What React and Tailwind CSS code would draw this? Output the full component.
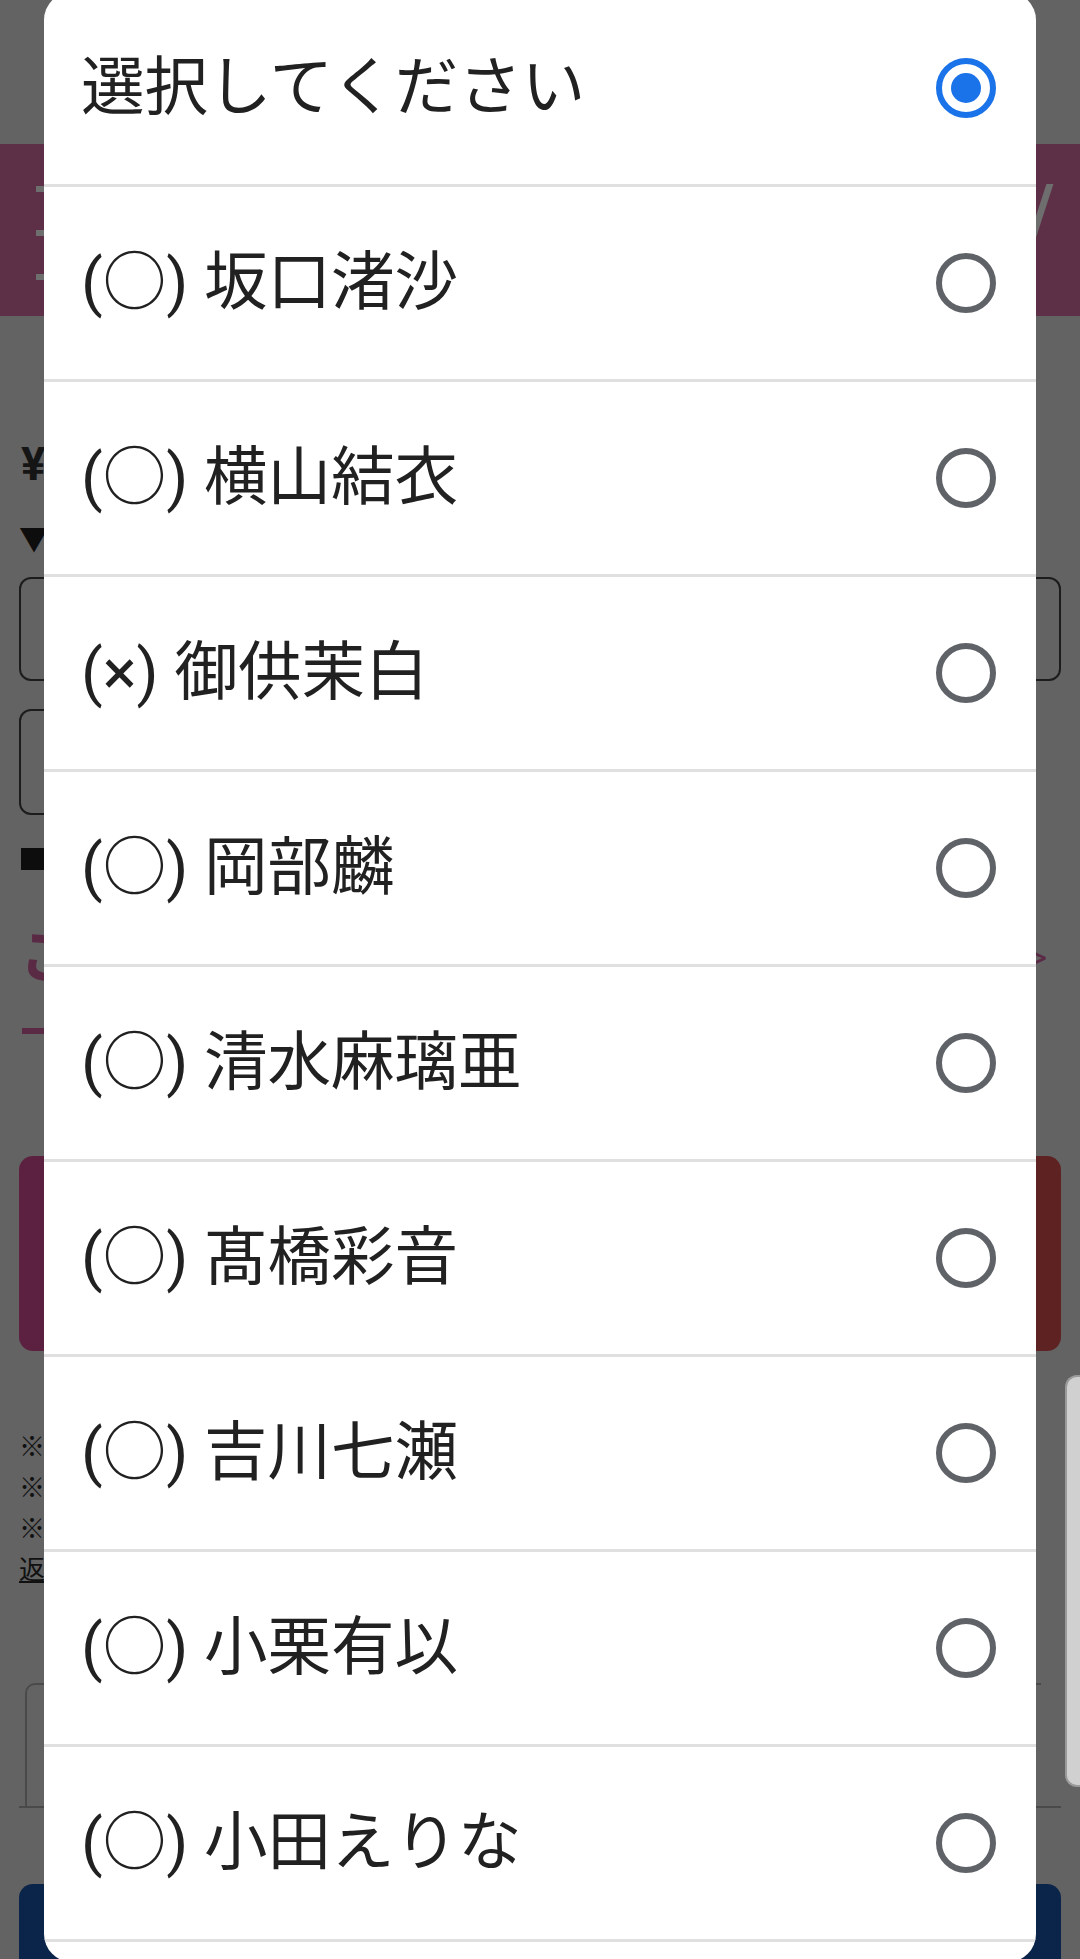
import React from "react";

const items = [
  { label: "選択してください", selected: true },
  { label: "(○) 坂口渚沙" },
  { label: "(○) 横山結衣" },
  { label: "(×) 御供茉白" },
  { label: "(○) 岡部麟" },
  { label: "(○) 清水麻璃亜" },
  { label: "(○) 髙橋彩音" },
  { label: "(○) 吉川七瀬" },
  { label: "(○) 小栗有以" },
  { label: "(○) 小田えりな" },
  { label: "" },
];

function Radio({ selected }) {
  if (selected) {
    return (
      <div className="w-[60px] h-[60px] rounded-full border-[6px] border-[#1a73e8] flex items-center justify-center shrink-0">
        <div className="w-[30px] h-[30px] rounded-full bg-[#1a73e8]" />
      </div>
    );
  }
  return <div className="w-[60px] h-[60px] rounded-full border-[6px] border-[#5f6368] shrink-0" />;
}

function Background() {
  return (
    <div className="flex flex-col font-['Roboto','Noto_Sans_CJK_JP',sans-serif]">
      <div className="h-[144px]" />
      <div className="h-[172px] bg-[#5e3048] flex items-start justify-between">
        <div className="flex flex-col gap-[38px] pt-[42px] pl-[36px]">
          <div className="w-[40px] h-[6px] bg-[#6e6e6e]" />
          <div className="w-[40px] h-[6px] bg-[#6e6e6e]" />
          <div className="w-[40px] h-[6px] bg-[#6e6e6e]" />
        </div>
        <div className="pt-[40px] pr-[36px]">
          <div className="w-[7px] h-[58px] bg-[#6e6e6e] skew-x-[-18deg]" />
        </div>
      </div>
      <div className="flex flex-col px-[19px]">
        <div className="h-[171px] flex items-end">
          <span className="text-[46px] leading-[46px] text-[#151515] font-bold pl-[2px]">¥</span>
        </div>
        <div className="h-[90px] flex items-end pb-[22px]">
          <span className="text-[30px] leading-none text-[#0d0d0d]">▼</span>
        </div>
        <div className="h-[104px] rounded-[12px] border-2 border-[#1c1c1c]" />
        <div className="h-[28px]" />
        <div className="h-[106px] w-[700px] rounded-[12px] border-2 border-[#1c1c1c]" />
        <div className="h-[33px]" />
        <div className="h-[22px] w-[24px] bg-[#0d0d0d] ml-[2px]" />
        <div className="h-[55px]" />
        <div className="flex justify-between items-center h-[65px] text-[#5a2a45]">
          <span className="text-[60px] leading-none font-bold">こ</span>
          <span className="text-[36px] leading-none pr-[14px]">&gt;</span>
        </div>
        <div className="h-[38px]" />
        <div className="h-[6px] w-[40px] bg-[#5a2a45] ml-[3px]" />
        <div className="h-[122px]" />
        <div className="h-[195px] rounded-[14px] bg-gradient-to-r from-[#5c2040] to-[#5e2222]" />
        <div className="h-[76px]" />
        <div className="flex flex-col text-[26px] leading-[41px] text-[#111]">
          <span>※あ</span>
          <span>※か</span>
          <span>※あ</span>
          <span className="underline">返品</span>
        </div>
        <div className="h-[92px]" />
        <div className="flex flex-col">
          <div className="h-[123px] ml-[6px] mr-[20px] rounded-tl-[10px] border-l-2 border-t-2 border-[#4a4a4a]" />
          <div className="h-[2px] bg-[#4a4a4a]" />
        </div>
        <div className="h-[76px]" />
        <div className="h-[80px] rounded-t-[14px] bg-[#0b2449]" />
      </div>
      <div className="absolute right-0 top-[1375px] w-[15px] h-[412px] rounded-l-[12px] bg-[#d0d0d0] border-l-2 border-t-2 border-b-2 border-[#9a9a9a]" />
    </div>
  );
}

export default function App() {
  return (
    <div className="relative w-[1080px] h-[1959px] overflow-hidden bg-[#636363]">
      <Background />
      <div className="absolute left-[44px] top-[-8px] w-[992px] h-[1970px] rounded-[28px] bg-white overflow-hidden flex flex-col font-['Roboto','Noto_Sans_CJK_JP',sans-serif]">
        {items.map((it, i) => (
          <div key={i} className="flex flex-col shrink-0">
            <div className="h-[192px] flex items-center justify-between pl-[37px] pr-[40px]">
              <span className="text-[63.5px] leading-none text-[#212121]">{it.label}</span>
              {it.label && <Radio selected={it.selected} />}
            </div>
            {i < items.length - 1 && <div className="h-[3px] bg-[#e0e0e0]" />}
          </div>
        ))}
      </div>
    </div>
  );
}
